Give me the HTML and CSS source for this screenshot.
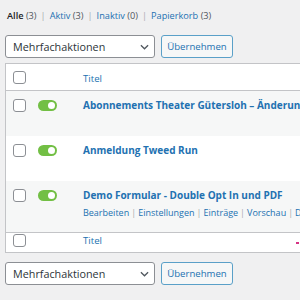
FILE: index.html
```html
<!DOCTYPE html>
<html lang="de">
<head>
<meta charset="utf-8">
<link rel="stylesheet" href="styles.css">
</head>
<body>
<div class="wrap">
  <ul class="subsubsub">
    <li><a class="current">Alle <span class="count">(3)</span></a><span class="sep">|</span></li>
    <li><a>Aktiv <span class="count">(3)</span></a><span class="sep">|</span></li>
    <li><a>Inaktiv <span class="count">(0)</span></a><span class="sep">|</span></li>
    <li><a>Papierkorb <span class="count">(3)</span></a></li>
  </ul>
  <div class="tablenav top">
    <div class="select">Mehrfachaktionen<svg class="chev" viewBox="0 0 10 6" width="9" height="6"><path d="M1 1l4 4 4-4" fill="none" stroke="#50575e" stroke-width="1.4"/></svg></div>
    <button class="btn">Übernehmen</button>
  </div>
  <div class="table">
    <div class="row head">
      <div class="cb"><span class="box"></span></div>
      <div class="tg"></div>
      <div class="title"><a class="sort">Titel</a></div>
    </div>
    <div class="row alt">
      <div class="cb"><span class="box"></span></div>
      <div class="tg"><span class="toggle"></span></div>
      <div class="title"><a class="name">Abonnements Theater Gütersloh – Änderungsformular</a></div>
    </div>
    <div class="row">
      <div class="cb"><span class="box"></span></div>
      <div class="tg"><span class="toggle"></span></div>
      <div class="title"><a class="name">Anmeldung Tweed Run</a></div>
    </div>
    <div class="row alt tall">
      <div class="cb"><span class="box"></span></div>
      <div class="tg"><span class="toggle"></span></div>
      <div class="title">
        <a class="name">Demo Formular - Double Opt In und PDF</a>
        <div class="actions"><a>Bearbeiten</a><span class="bar">|</span><a>Einstellungen</a><span class="bar">|</span><a>Einträge</a><span class="bar">|</span><a>Vorschau</a><span class="bar">|</span><a>Duplizieren</a></div>
      </div>
    </div>
    <div class="row foot">
      <div class="cb"><span class="box"></span></div>
      <div class="tg"></div>
      <div class="title"><a class="sort">Titel</a></div>
      <span class="mark"></span>
    </div>
  </div>
  <div class="tablenav bottom">
    <div class="select">Mehrfachaktionen<svg class="chev" viewBox="0 0 10 6" width="9" height="6"><path d="M1 1l4 4 4-4" fill="none" stroke="#50575e" stroke-width="1.4"/></svg></div>
    <button class="btn">Übernehmen</button>
  </div>
</div>
</body>
</html>
```
FILE: styles.css
```css
html, body {
  margin: 0;
  padding: 0;
  background: #f0f0f1;
  overflow: hidden;
}
body {
  font-family: "Open Sans", "Noto Sans", sans-serif;
  color: #3c434a;
  font-size: 12px;
}
.wrap {
  padding: 0 0 0 5px;
  width: 420px;
}
a { color: #2271b1; text-decoration: none; }
.subsubsub {
  list-style: none;
  margin: 0;
  padding: 8px 0 0 2px;
  display: flex;
  font-size: 9.2px;
  line-height: 16px;
  height: 18px;
}
.subsubsub .current { color: #1d2327; font-weight: 600; }
.count { color: #50575e; font-weight: 400; }
.sep { color: #a7aaad; margin: 0 4px; }
.tablenav {
  display: flex;
  gap: 6px;
  align-items: center;
}
.tablenav.top { margin-top: 9px; }
.tablenav.bottom { margin-top: 9px; }
.select {
  box-sizing: border-box;
  width: 150px;
  height: 23px;
  border: 1px solid #8c8f94;
  border-radius: 3px;
  background: #fff;
  color: #2c3338;
  font-size: 10.8px;
  line-height: 21px;
  padding: 0 0 0 7px;
  display: flex;
  justify-content: space-between;
  align-items: center;
}
.chev { margin-right: 5px; }
.btn {
  box-sizing: border-box;
  height: 23px;
  width: 72px;
  padding: 0;
  border: 1px solid #5aa0c8;
  border-radius: 3px;
  background: #f6f7f7;
  color: #2271b1;
  font-family: inherit;
  font-size: 9.6px;
}
.table {
  margin-top: 5px;
  background: #fff;
  border: 1px solid #c3c4c7;
  border-right: 0;
}
.row {
  display: flex;
  align-items: flex-start;
  height: 45px;
  position: relative;
}
.row.alt { background: #f6f7f7; }
.row.tall { height: 51px; }
.row.head { height: 26px; border-bottom: 1px solid #c3c4c7; align-items: center; }
.row.foot { height: 19px; border-top: 1px solid #c3c4c7; }
.cb { flex: none; width: 27px; padding-left: 7px; box-sizing: border-box; }
.row:not(.head):not(.foot) .cb { padding-top: 8px; }
.row.foot .cb { padding-top: 1px; }
.box {
  box-sizing: border-box;
  display: block;
  width: 13px;
  height: 13px;
  border: 1px solid #8c8f94;
  border-radius: 3px;
  background: #fff;
}
.tg { flex: none; width: 50px; padding-left: 5px; box-sizing: border-box; }
.row:not(.head):not(.foot) .tg { padding-top: 9px; }
.toggle {
  display: block;
  width: 19px;
  height: 11px;
  border-radius: 6px;
  background: #72bf44;
  position: relative;
}
.toggle::after {
  content: "";
  position: absolute;
  right: 2px;
  top: 2px;
  width: 7px;
  height: 7px;
  border-radius: 50%;
  background: #fff;
}
.title { flex: none; white-space: nowrap; }
.row:not(.head):not(.foot) .title { padding-top: 5px; }
.row.foot .title { line-height: 13px; }
.sort { font-size: 9.6px; }
.name { font-size: 10px; font-weight: 700; line-height: 18px; }
.actions { font-size: 9px; line-height: 16px; margin-top: 1px; }
.bar { color: #a7aaad; margin: 0 2px; }
.mark {
  position: absolute;
  left: 290px;
  top: 9px;
  width: 3px;
  height: 2px;
  background: #d63384;
}
```
